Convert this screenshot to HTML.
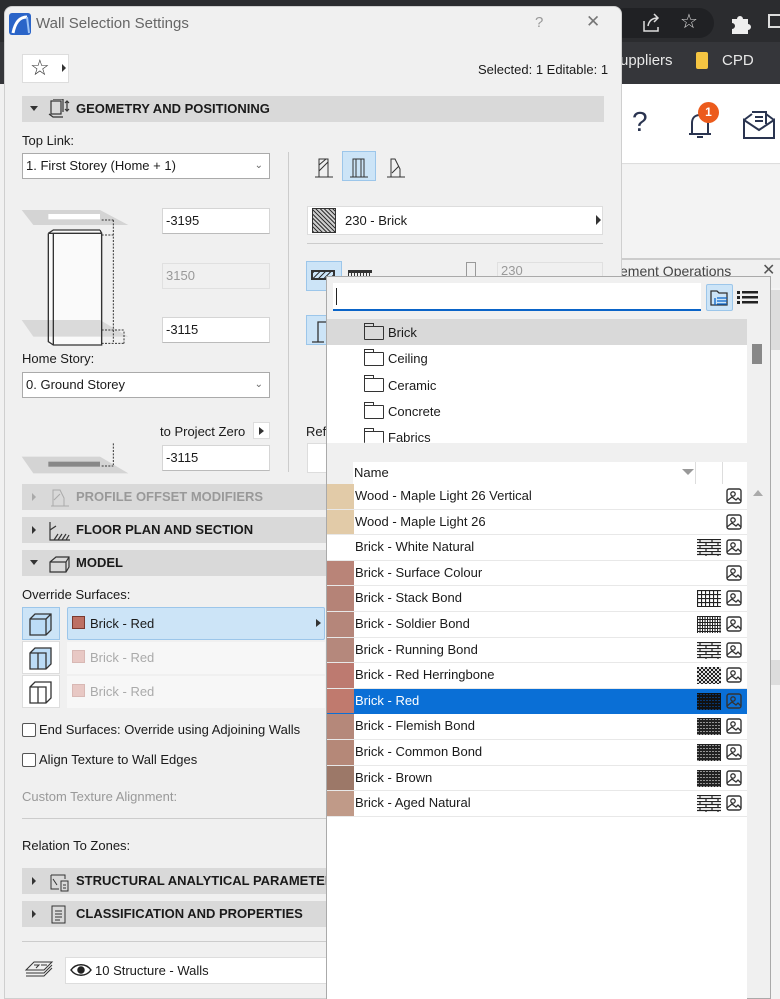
<!DOCTYPE html>
<html><head><meta charset="utf-8"><style>
*{margin:0;padding:0;box-sizing:border-box}
body{width:780px;height:999px;overflow:hidden;position:relative;background:#f1f1f1;font-family:"Liberation Sans",sans-serif;font-size:13px;color:#1a1a1a}
.a{position:absolute}
.sec{position:absolute;left:22px;width:582px;height:26px;background:#d9d9d9;font-weight:bold;font-size:13px;line-height:26px}
.sec .t{position:absolute;left:54px}
.tri{position:absolute;left:10px;top:9px;width:0;height:0;border-left:4px solid #333;border-top:4px solid transparent;border-bottom:4px solid transparent}
.trd{position:absolute;left:8px;top:10px;border-top:5px solid #333;border-left:4px solid transparent;border-right:4px solid transparent}
.inp{position:absolute;background:#fff;border:1px solid #d5d5d5;border-bottom-color:#bbb;padding-left:3px;line-height:24px;height:26px}
.row{position:absolute;left:327px;width:420px;height:25.6px;border-bottom:1px solid #e8e8e8;background:#fff;line-height:24px}
.row .sw{position:absolute;left:0;top:0;width:27px;height:24.6px}
.row .n{position:absolute;left:28px}
.row .pi{position:absolute;left:399px;top:4px}
.row .pt{position:absolute;left:370px;top:4px;width:24px;height:17px}
.br{background:repeating-linear-gradient(0deg,#fff 0 3px,#333 3px 4.5px),#fff;position:relative}
.fold{position:absolute;left:364px;width:20px;height:14px;border:1px solid #333;border-radius:1px}
.fold:before{content:"";position:absolute;left:-1px;top:-4px;width:8px;height:3px;border:1px solid #333;border-bottom:none}
</style></head><body>
<!-- browser background -->
<div class="a" style="left:0;top:0;width:780px;height:42px;background:#2b2c2f"></div>
<div class="a" style="left:0;top:42px;width:780px;height:42px;background:#35363a"></div>
<div class="a" style="left:610px;top:8px;width:104px;height:30px;background:#202124;border-radius:15px"></div>
<svg class="a" style="left:640px;top:12px" width="22" height="22" fill="none" stroke="#ddd" stroke-width="1.5"><path d="M4 9v10h14v-4M8 14c1-6 5-8 10-8M14 2l4 4-4 4"/></svg>
<div class="a" style="left:680px;top:9px;color:#ddd;font-size:20px">☆</div>
<svg class="a" style="left:729px;top:12px" width="22" height="22" fill="#eee"><path d="M3 7h5a3 3 0 016 0h5v5a3 3 0 010 6v4H3v-5a3 3 0 000-6z"/></svg>
<div class="a" style="left:768px;top:14px;width:14px;height:14px;border:2px solid #ddd"></div>
<div class="a" style="left:620px;top:52px;color:#e8e8e8;font-size:15px">uppliers</div>
<div class="a" style="left:696px;top:52px;width:12px;height:17px;background:#f5c542;border-radius:2px"></div>
<div class="a" style="left:722px;top:52px;color:#e8e8e8;font-size:15px">CPD</div>
<div class="a" style="left:600px;top:84px;width:180px;height:80px;background:#fff;border-bottom:1px solid #ddd"></div>
<div class="a" style="left:632px;top:106px;font-size:28px;color:#2a3450">?</div>
<svg class="a" style="left:683px;top:108px" width="32" height="32" fill="none" stroke="#2a3450" stroke-width="2"><path d="M6 26h22M9 26V15c0-5 3-8 8-8s8 3 8 8v11M14 29h6"/></svg>
<div class="a" style="left:698px;top:102px;width:21px;height:21px;border-radius:50%;background:#ec5b1c;color:#fff;font-size:12px;font-weight:bold;text-align:center;line-height:21px">1</div>
<svg class="a" style="left:742px;top:108px" width="34" height="32" fill="none" stroke="#2a3450" stroke-width="2"><path d="M2 12v18h30V12L17 22z M2 12l8-6M32 12l-8-6M10 4h14v12M13 9h8M13 13h8"/></svg>
<div class="a" style="left:620px;top:165px;width:160px;height:834px;background:#f3f3f3"></div>
<div class="a" style="left:620px;top:258px;width:160px;height:30px;background:#f0f0f0;border-top:2px solid #ccc"></div>
<div class="a" style="left:620px;top:263px;font-size:14px;color:#444">ement Operations</div>
<div class="a" style="left:762px;top:260px;font-size:16px;color:#555">✕</div>
<div class="a" style="left:770px;top:290px;width:10px;height:60px;background:#ddd"></div>
<div class="a" style="left:770px;top:660px;width:10px;height:25px;background:#ddd"></div>

<!-- dialog -->
<div class="a" style="left:4px;top:6px;width:618px;height:993px;background:#f0f0f0;border:1px solid #cfcfcf;border-radius:8px 8px 0 0"></div>
<svg class="a" style="left:9px;top:13px" width="22" height="22"><rect x="0" y="0" width="22" height="22" rx="3" fill="#2a64c8"/><path d="M4 20C6 10 10 4 18 4" stroke="#fff" stroke-width="3" fill="none"/><path d="M18 4l2 16" stroke="#9cc2f5" stroke-width="2"/></svg>
<div class="a" style="left:36px;top:15px;font-size:15px;color:#666">Wall Selection Settings</div>
<div class="a" style="left:535px;top:14px;font-size:15px;color:#999">?</div>
<div class="a" style="left:586px;top:12px;font-size:17px;color:#777">✕</div>
<div class="a" style="left:22px;top:54px;width:47px;height:29px;background:#fff;border:1px solid #ddd"></div>
<div class="a" style="left:30px;top:55px;font-size:22px;color:#333">☆</div>
<div class="a" style="left:62px;top:64px;border-left:4px solid #333;border-top:4px solid transparent;border-bottom:4px solid transparent"></div>
<div class="a" style="left:478px;top:62px;font-size:13px">Selected: 1 Editable: 1</div>

<div class="sec" style="top:96px"><div class="trd"></div>
<svg class="a" style="left:26px;top:3px" width="22" height="20" viewBox="0 0 22 20" fill="none" stroke="#333" stroke-width="1.2"><rect x="3" y="2" width="10" height="13"/><path d="M5 0h10v13M1 15l4 3h10M19 2v10M17 4l2-2 2 2M17 10l2 2 2-2"/></svg>
<span class="t">GEOMETRY AND POSITIONING</span></div>

<div class="a" style="left:22px;top:133px">Top Link:</div>
<div class="inp" style="left:22px;top:153px;width:248px;border-color:#aaa">1. First Storey (Home + 1)<span class="a" style="right:6px;top:0;color:#666;font-size:10px">⌄</span></div>
<div class="a" style="left:288px;top:152px;width:1px;height:320px;background:#ccc"></div>

<!-- wall diagram -->
<svg class="a" style="left:0;top:190px" width="340" height="300" viewBox="0 0 1020 900">
<path d="M65 60H300L385 105H100z" fill="#d4d4d4"/><rect x="145" y="72" width="155" height="16" fill="#fff"/>
<path d="M145 465V130l15-10H300V465z" fill="#fafafa"/>
<path d="M65 390H300L385 440H100z" fill="#d4d4d4" opacity="0.85"/>
<path d="M145 130l15-10H300M145 130V455l15 10H305V130H160V465M145 130H160M300 120l5 10" fill="none" stroke="#333" stroke-width="4"/>
<path d="M340 90V460M305 90h35M305 135h35M305 420h70M305 460h70M372 425V460" fill="none" stroke="#333" stroke-width="3" stroke-dasharray="6 4"/>
<path d="M65 800H300L385 850H100z" fill="#d4d4d4"/><rect x="145" y="815" width="155" height="15" fill="#888"/>
<path d="M340 760V825M305 828h35" fill="none" stroke="#333" stroke-width="3" stroke-dasharray="6 4"/>
</svg>
<div class="inp" style="left:162px;top:208px;width:108px">-3195</div>
<div class="inp" style="left:162px;top:263px;width:108px;background:#f0f0f0;color:#999;border-color:#e0e0e0">3150</div>
<div class="inp" style="left:162px;top:317px;width:108px">-3115</div>
<div class="a" style="left:22px;top:351px">Home Story:</div>
<div class="inp" style="left:22px;top:372px;width:248px;border-color:#aaa">0. Ground Storey<span class="a" style="right:6px;top:0;color:#666;font-size:10px">⌄</span></div>
<div class="a" style="left:160px;top:424px">to Project Zero</div>
<div class="a" style="left:253px;top:422px;width:17px;height:17px;background:#fff;border:1px solid #ddd"></div>
<div class="a" style="left:259px;top:427px;border-left:5px solid #333;border-top:4px solid transparent;border-bottom:4px solid transparent"></div>
<div class="inp" style="left:162px;top:445px;width:108px">-3115</div>

<!-- right column -->
<svg class="a" style="left:312px;top:151px" width="96" height="30"><rect x="30.5" y="0.5" width="33" height="29" fill="#cce4f7" stroke="#9cc6ea"/>
<g fill="none" stroke="#333"><path d="M3 26h18M7 26V8h9v18M7 20l9-9M7 14l7-6"/><path d="M38 26h18M41 26V8h11v18M44 8v18M49 8v18"/><path d="M75 26h18M79 26V8h4l5 10v8M80 22l7-7"/></g></svg>
<div class="a" style="left:307px;top:206px;width:296px;height:29px;background:#fff;border:1px solid #ddd"></div>
<div class="a" style="left:312px;top:208px;width:24px;height:25px;border:1px solid #333;background:repeating-linear-gradient(45deg,#333 0 1px,#ccc 1px 3px)"></div>
<div class="a" style="left:345px;top:213px">230 - Brick</div>
<div class="a" style="left:596px;top:215px;border-left:5px solid #333;border-top:5px solid transparent;border-bottom:5px solid transparent"></div>
<div class="a" style="left:307px;top:243px;width:296px;height:1px;background:#ccc"></div>
<div class="a" style="left:306px;top:261px;width:36px;height:30px;background:#cce4f7;border:1px solid #9cc6ea"></div>
<div class="a" style="left:311px;top:270px;width:24px;height:10px;border:2px solid #333;background:repeating-linear-gradient(135deg,#333 0 1px,#cce4f7 1px 4px)"></div>
<div class="a" style="left:348px;top:270px;width:24px;height:10px;border-top:3px solid #333;background:repeating-linear-gradient(90deg,#333 0 1px,#f0f0f0 1px 3px)"></div>
<div class="a" style="left:466px;top:262px;width:10px;height:16px;border:1px solid #999"></div>
<div class="a" style="left:497px;top:262px;width:106px;height:18px;border:1px solid #e0e0e0;color:#999;padding-left:3px">230</div>
<div class="a" style="left:306px;top:315px;width:36px;height:30px;background:#cce4f7;border:1px solid #9cc6ea"></div>
<svg class="a" style="left:310px;top:318px" width="20" height="26" fill="none" stroke="#333" stroke-width="1.3"><path d="M2 24h12M8 24V4h12"/></svg>
<div class="a" style="left:306px;top:424px">Ref</div>
<div class="a" style="left:307px;top:443px;width:30px;height:30px;background:#fff;border:1px solid #ddd"></div>

<!-- lower sections -->
<div class="sec" style="top:484px;color:#999"><div class="tri" style="border-left-color:#aaa"></div>
<svg class="a" style="left:26px;top:2px" width="22" height="22" fill="none" stroke="#aaa"><path d="M3 20h18M5 20V4h7l4 8v8M6 14l6-6"/></svg><span class="t">PROFILE OFFSET MODIFIERS</span></div>
<div class="sec" style="top:517px"><div class="tri"></div>
<svg class="a" style="left:26px;top:3px" width="22" height="22" fill="none" stroke="#333" stroke-width="1.2"><path d="M2 2v18h20M6 20l4-6M10 20l4-6M14 20l4-6M18 20l3-5M2 10l6-4"/></svg><span class="t">FLOOR PLAN AND SECTION</span></div>
<div class="sec" style="top:550px"><div class="trd"></div>
<svg class="a" style="left:26px;top:2px" width="24" height="22" fill="none" stroke="#333" stroke-width="1.2"><path d="M2 10l6-5h13v10l-3 5H2zM2 10h16v10M18 10l3-5"/></svg><span class="t">MODEL</span></div>
<div class="a" style="left:22px;top:587px">Override Surfaces:</div>
<div class="a" style="left:22px;top:607px;width:38px;height:33px;background:#cce4f7;border:1px solid #9cc6ea"></div>
<div class="a" style="left:22px;top:641px;width:38px;height:33px;background:#fff;border:1px solid #ddd"></div>
<div class="a" style="left:22px;top:675px;width:38px;height:33px;background:#fff;border:1px solid #ddd"></div>
<svg class="a" style="left:28px;top:611px" width="26" height="94" fill="none" stroke="#333" stroke-width="1.3">
<path d="M2 8l5-5h16v16l-5 5H2zM2 8h16v16M18 8l5-5" fill="#bcdcf6"/>
<path d="M2 42l5-5h16v16l-5 5H2zM2 42h16v16M10 42v16" fill="#bcdcf6"/>
<path d="M2 76l5-5h16v16l-5 5H2zM2 76h16v16M10 76v16" fill="#fff"/></svg>
<div class="a" style="left:67px;top:607px;width:258px;height:33px;background:#cce4f7;border:1px solid #9cc6ea;border-radius:2px"></div>
<div class="a" style="left:72px;top:616px;width:13px;height:13px;background:#bd7064;border:1px solid #7a3a30"></div>
<div class="a" style="left:90px;top:616px">Brick - Red</div>
<div class="a" style="left:316px;top:619px;border-left:5px solid #333;border-top:4px solid transparent;border-bottom:4px solid transparent"></div>
<div class="a" style="left:67px;top:642px;width:258px;height:32px;background:#f7f7f7"></div>
<div class="a" style="left:72px;top:650px;width:13px;height:13px;background:#e8c8c4;border:1px solid #d8b8b4"></div>
<div class="a" style="left:90px;top:650px;color:#aaa">Brick - Red</div>
<div class="a" style="left:67px;top:676px;width:258px;height:32px;background:#f7f7f7"></div>
<div class="a" style="left:72px;top:684px;width:13px;height:13px;background:#e8c8c4;border:1px solid #d8b8b4"></div>
<div class="a" style="left:90px;top:684px;color:#aaa">Brick - Red</div>
<div class="a" style="left:22px;top:723px;width:14px;height:14px;border:1px solid #555;background:#fff;border-radius:2px"></div>
<div class="a" style="left:39px;top:722px">End Surfaces: Override using Adjoining Walls</div>
<div class="a" style="left:22px;top:753px;width:14px;height:14px;border:1px solid #555;background:#fff;border-radius:2px"></div>
<div class="a" style="left:39px;top:752px">Align Texture to Wall Edges</div>
<div class="a" style="left:22px;top:789px;color:#999">Custom Texture Alignment:</div>
<div class="a" style="left:22px;top:818px;width:304px;height:1px;background:#ccc"></div>
<div class="a" style="left:22px;top:838px">Relation To Zones:</div>
<div class="sec" style="top:868px"><div class="tri"></div>
<svg class="a" style="left:26px;top:3px" width="22" height="22" fill="none" stroke="#333"><path d="M3 4h14v4M3 4v14h8M13 10h7v10h-7zM15 14h3M15 17h3M5 8l4 6"/></svg><span class="t">STRUCTURAL ANALYTICAL PARAMETERS</span></div>
<div class="sec" style="top:901px"><div class="tri"></div>
<svg class="a" style="left:28px;top:3px" width="18" height="22" fill="none" stroke="#333"><rect x="2" y="2" width="13" height="17"/><path d="M5 7h7M5 10h7M5 13h7M5 16h5"/></svg><span class="t">CLASSIFICATION AND PROPERTIES</span></div>
<div class="a" style="left:22px;top:941px;width:304px;height:1px;background:#ccc"></div>
<svg class="a" style="left:24px;top:957px" width="30" height="22" fill="none" stroke="#333"><path d="M2 13l8-8h18l-8 8zM2 16h18l8-8M2 19h18l8-8"/><path d="M10 8h5l-3 3M17 8h6"/></svg>
<div class="a" style="left:65px;top:957px;width:262px;height:27px;background:#fff;border:1px solid #ddd"></div>
<svg class="a" style="left:70px;top:963px" width="22" height="14" fill="none" stroke="#222" stroke-width="1.5"><path d="M1 7c5-7 15-7 20 0c-5 7-15 7-20 0z"/><circle cx="11" cy="7" r="3" fill="#222"/></svg>
<div class="a" style="left:95px;top:963px">10 Structure - Walls</div>

<!-- popup -->
<div class="a" style="left:326px;top:276px;width:445px;height:723px;background:#f0f0f0;border:1px solid #aaa"></div>
<div class="a" style="left:333px;top:283px;width:368px;height:28px;background:#fff;border-bottom:2px solid #0a64c8"></div>
<div class="a" style="left:336px;top:288px;width:1px;height:17px;background:#222"></div>
<div class="a" style="left:706px;top:284px;width:27px;height:27px;background:#cce4f7;border:1px solid #9cc6ea;border-radius:2px"></div>
<svg class="a" style="left:709px;top:288px" width="22" height="20" fill="none" stroke="#333" stroke-width="1.3"><path d="M2 3h6l2 2h8v12H2z"/><path d="M8 10h10M8 13h10M8 16h10M6 10v7" stroke="#0a64c8"/></svg>
<svg class="a" style="left:737px;top:290px" width="22" height="16" fill="#222"><rect x="0" y="1" width="3" height="3"/><rect x="5" y="1" width="16" height="2.5"/><rect x="0" y="6" width="3" height="3"/><rect x="5" y="6" width="16" height="2.5"/><rect x="0" y="11" width="3" height="3"/><rect x="5" y="11" width="16" height="2.5"/></svg>
<div class="a" style="left:327px;top:319px;width:420px;height:124px;background:#fff"></div>
<div class="a" style="left:327px;top:319px;width:420px;height:26px;background:#d9d9d9"></div>
<div class="a" style="left:752px;top:344px;width:10px;height:20px;background:#888"></div>
<div class="fold" style="top:326px"></div><div class="a" style="left:388px;top:325px">Brick</div>
<div class="fold" style="top:352px"></div><div class="a" style="left:388px;top:351px">Ceiling</div>
<div class="fold" style="top:378px"></div><div class="a" style="left:388px;top:378px">Ceramic</div>
<div class="fold" style="top:405px"></div><div class="a" style="left:388px;top:404px">Concrete</div>
<div class="fold" style="top:431px;height:12px;border-bottom:none"></div><div class="a" style="left:388px;top:430px;height:13px;overflow:hidden">Fabrics</div>
<div class="a" style="left:327px;top:462px;width:420px;height:22px;background:#fff"></div>
<div class="a" style="left:327px;top:462px;width:26px;height:22px;background:#f0f0f0"></div>
<div class="a" style="left:354px;top:465px">Name</div>
<div class="a" style="left:682px;top:469px;border-top:6px solid #999;border-left:6px solid transparent;border-right:6px solid transparent"></div>
<div class="a" style="left:695px;top:462px;width:1px;height:22px;background:#ddd"></div>
<div class="a" style="left:722px;top:462px;width:1px;height:22px;background:#ddd"></div>
<div class="a" style="left:753px;top:490px;border-bottom:6px solid #aaa;border-left:5px solid transparent;border-right:5px solid transparent"></div>

<svg width="0" height="0" style="position:absolute"><defs>
<symbol id="pic" viewBox="0 0 16 16"><rect x="1" y="1" width="14" height="14" rx="2" fill="none" stroke="#333" stroke-width="1.4"/><circle cx="7" cy="6" r="2.2" fill="none" stroke="#333" stroke-width="1.3"/><path d="M1 13l5-4 4 3 2-2 3 3" fill="none" stroke="#333" stroke-width="1.3"/></symbol>
<pattern id="rb" width="12" height="6" patternUnits="userSpaceOnUse"><rect width="12" height="6" fill="#fff"/><path d="M0 0.5h12M0 3.5h12M3 0v3M9 3v3" stroke="#222" stroke-width="1.2"/></pattern>
<pattern id="sb" width="4" height="4" patternUnits="userSpaceOnUse"><rect width="4" height="4" fill="#fff"/><path d="M0 .5h4M.5 0v4" stroke="#222" stroke-width="1.2"/></pattern>
<pattern id="so" width="2.5" height="3" patternUnits="userSpaceOnUse"><rect width="3" height="3" fill="#fff"/><path d="M0 .5h3M.5 0v3" stroke="#222" stroke-width="1.1"/></pattern>
<pattern id="hb" width="4" height="4" patternUnits="userSpaceOnUse"><rect width="4" height="4" fill="#ddd"/><path d="M0 0h2v2H0zM2 2h2v2H2z" fill="#222"/></pattern>
<pattern id="dk" width="6" height="3" patternUnits="userSpaceOnUse"><rect width="6" height="3" fill="#222"/><path d="M0 1.5h2M3 1.5h2" stroke="#bbb" stroke-width="0.8"/></pattern>
<pattern id="dkb" width="6" height="3" patternUnits="userSpaceOnUse"><rect width="6" height="3" fill="#111"/><path d="M0 1.5h2M3 1.5h2" stroke="#06448f" stroke-width="0.8"/></pattern>
</defs></svg>

<div class="row" style="top:484px"><div class="sw" style="background:#e2cba8"></div><span class="n">Wood - Maple Light 26 Vertical</span><svg class="pi" width="16" height="16"><use href="#pic"/></svg></div>
<div class="row" style="top:509.6px"><div class="sw" style="background:#e2cba8"></div><span class="n">Wood - Maple Light 26</span><svg class="pi" width="16" height="16"><use href="#pic"/></svg></div>
<div class="row" style="top:535.2px"><div class="sw" style="background:#fff"></div><span class="n">Brick - White Natural</span><svg class="pt"><rect width="24" height="17" fill="url(#rb)"/></svg><svg class="pi" width="16" height="16"><use href="#pic"/></svg></div>
<div class="row" style="top:560.8px"><div class="sw" style="background:#b98478"></div><span class="n">Brick - Surface Colour</span><svg class="pi" width="16" height="16"><use href="#pic"/></svg></div>
<div class="row" style="top:586.4px"><div class="sw" style="background:#b58377"></div><span class="n">Brick - Stack Bond</span><svg class="pt"><rect width="24" height="17" fill="url(#sb)"/></svg><svg class="pi" width="16" height="16"><use href="#pic"/></svg></div>
<div class="row" style="top:612px"><div class="sw" style="background:#b5867a"></div><span class="n">Brick - Soldier Bond</span><svg class="pt"><rect width="24" height="17" fill="url(#so)"/></svg><svg class="pi" width="16" height="16"><use href="#pic"/></svg></div>
<div class="row" style="top:637.6px"><div class="sw" style="background:#b5887c"></div><span class="n">Brick - Running Bond</span><svg class="pt"><rect width="24" height="17" fill="url(#rb)"/></svg><svg class="pi" width="16" height="16"><use href="#pic"/></svg></div>
<div class="row" style="top:663.2px"><div class="sw" style="background:#bd7a70"></div><span class="n">Brick - Red Herringbone</span><svg class="pt"><rect width="24" height="17" fill="url(#hb)"/></svg><svg class="pi" width="16" height="16"><use href="#pic"/></svg></div>
<div class="row" style="top:688.8px;background:#0a6fd6;color:#fff;border-bottom-color:#0a6fd6"><div class="sw" style="background:#c07a6e"></div><span class="n">Brick - Red</span><svg class="pt"><rect width="24" height="17" fill="url(#dkb)"/></svg><svg class="pi" width="16" height="16"><use href="#pic"/></svg></div>
<div class="row" style="top:714.4px"><div class="sw" style="background:#b5887a"></div><span class="n">Brick - Flemish Bond</span><svg class="pt"><rect width="24" height="17" fill="url(#dk)"/></svg><svg class="pi" width="16" height="16"><use href="#pic"/></svg></div>
<div class="row" style="top:740px"><div class="sw" style="background:#b58878"></div><span class="n">Brick - Common Bond</span><svg class="pt"><rect width="24" height="17" fill="url(#dk)"/></svg><svg class="pi" width="16" height="16"><use href="#pic"/></svg></div>
<div class="row" style="top:765.6px"><div class="sw" style="background:#9c7868"></div><span class="n">Brick - Brown</span><svg class="pt"><rect width="24" height="17" fill="url(#dk)"/></svg><svg class="pi" width="16" height="16"><use href="#pic"/></svg></div>
<div class="row" style="top:791.2px"><div class="sw" style="background:#c09a88"></div><span class="n">Brick - Aged Natural</span><svg class="pt"><rect width="24" height="17" fill="url(#rb)"/></svg><svg class="pi" width="16" height="16"><use href="#pic"/></svg></div>
<div class="a" style="left:327px;top:817px;width:420px;height:182px;background:#fff"></div>
</body></html>
